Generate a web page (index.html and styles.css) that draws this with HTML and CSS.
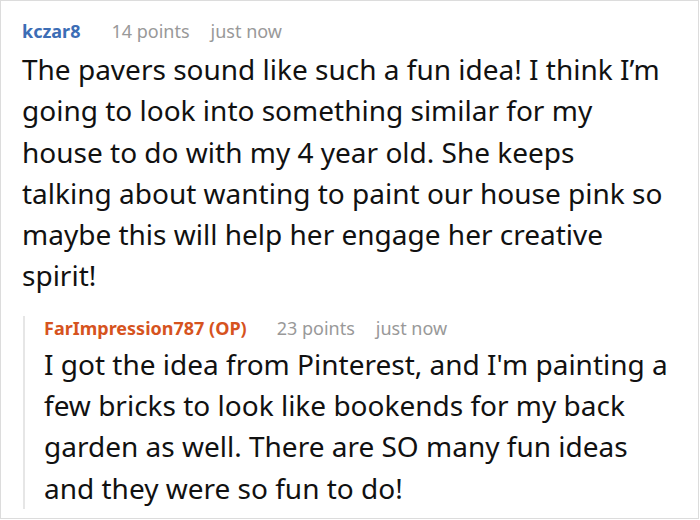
FILE: index.html
```html
<!DOCTYPE html>
<html>
<head>
<meta charset="utf-8">
<link rel="stylesheet" href="styles.css">
</head>
<body>
<div class="frame">
  <div class="comment">
    <div class="meta">
      <span class="user">kczar8</span>
      <span class="info">14 points</span>
      <span class="info">just now</span>
    </div>
    <p class="text">The pavers sound like such a fun idea! I think I’m going to look into something similar for my house to do with my 4 year old. She keeps talking about wanting to paint our house pink so maybe this will help her engage her creative spirit!</p>
    <div class="reply">
      <div class="meta">
        <span class="user op">FarImpression787 (OP)</span>
        <span class="info">23 points</span>
        <span class="info">just now</span>
      </div>
      <p class="text">I got the idea from Pinterest, and I'm painting a few bricks to look like bookends for my back garden as well. There are SO many fun ideas and they were so fun to do!</p>
    </div>
  </div>
</div>
</body>
</html>
```

FILE: styles.css
```css
html, body {
  margin: 0;
  padding: 0;
  background: #fff;
}
.frame {
  width: 699px;
  height: 519px;
  box-sizing: border-box;
  border: 1px solid #dcdcdc;
  font-family: "Noto Sans", sans-serif;
  overflow: hidden;
}
.comment {
  padding: 18px 27px 0 21px;
}
.meta {
  display: flex;
  align-items: baseline;
  font-size: 18px;
  line-height: 24px;
}
.user {
  font-weight: bold;
  color: #3c6db5;
  margin-right: 31px;
}
.user.op {
  color: #d6531e;
  margin-right: 30px;
}
.info {
  color: #999;
  margin-right: 21px;
}
.text {
  margin: 6px 0 0;
  font-size: 28px;
  line-height: 41.3px;
  color: #111;
}
.reply {
  margin: 19px 0 0 1px;
  border-left: 2px solid #e6e6e6;
  padding-left: 19px;
}
.reply .text {
  margin: 4px 0 -10px;
}
```
